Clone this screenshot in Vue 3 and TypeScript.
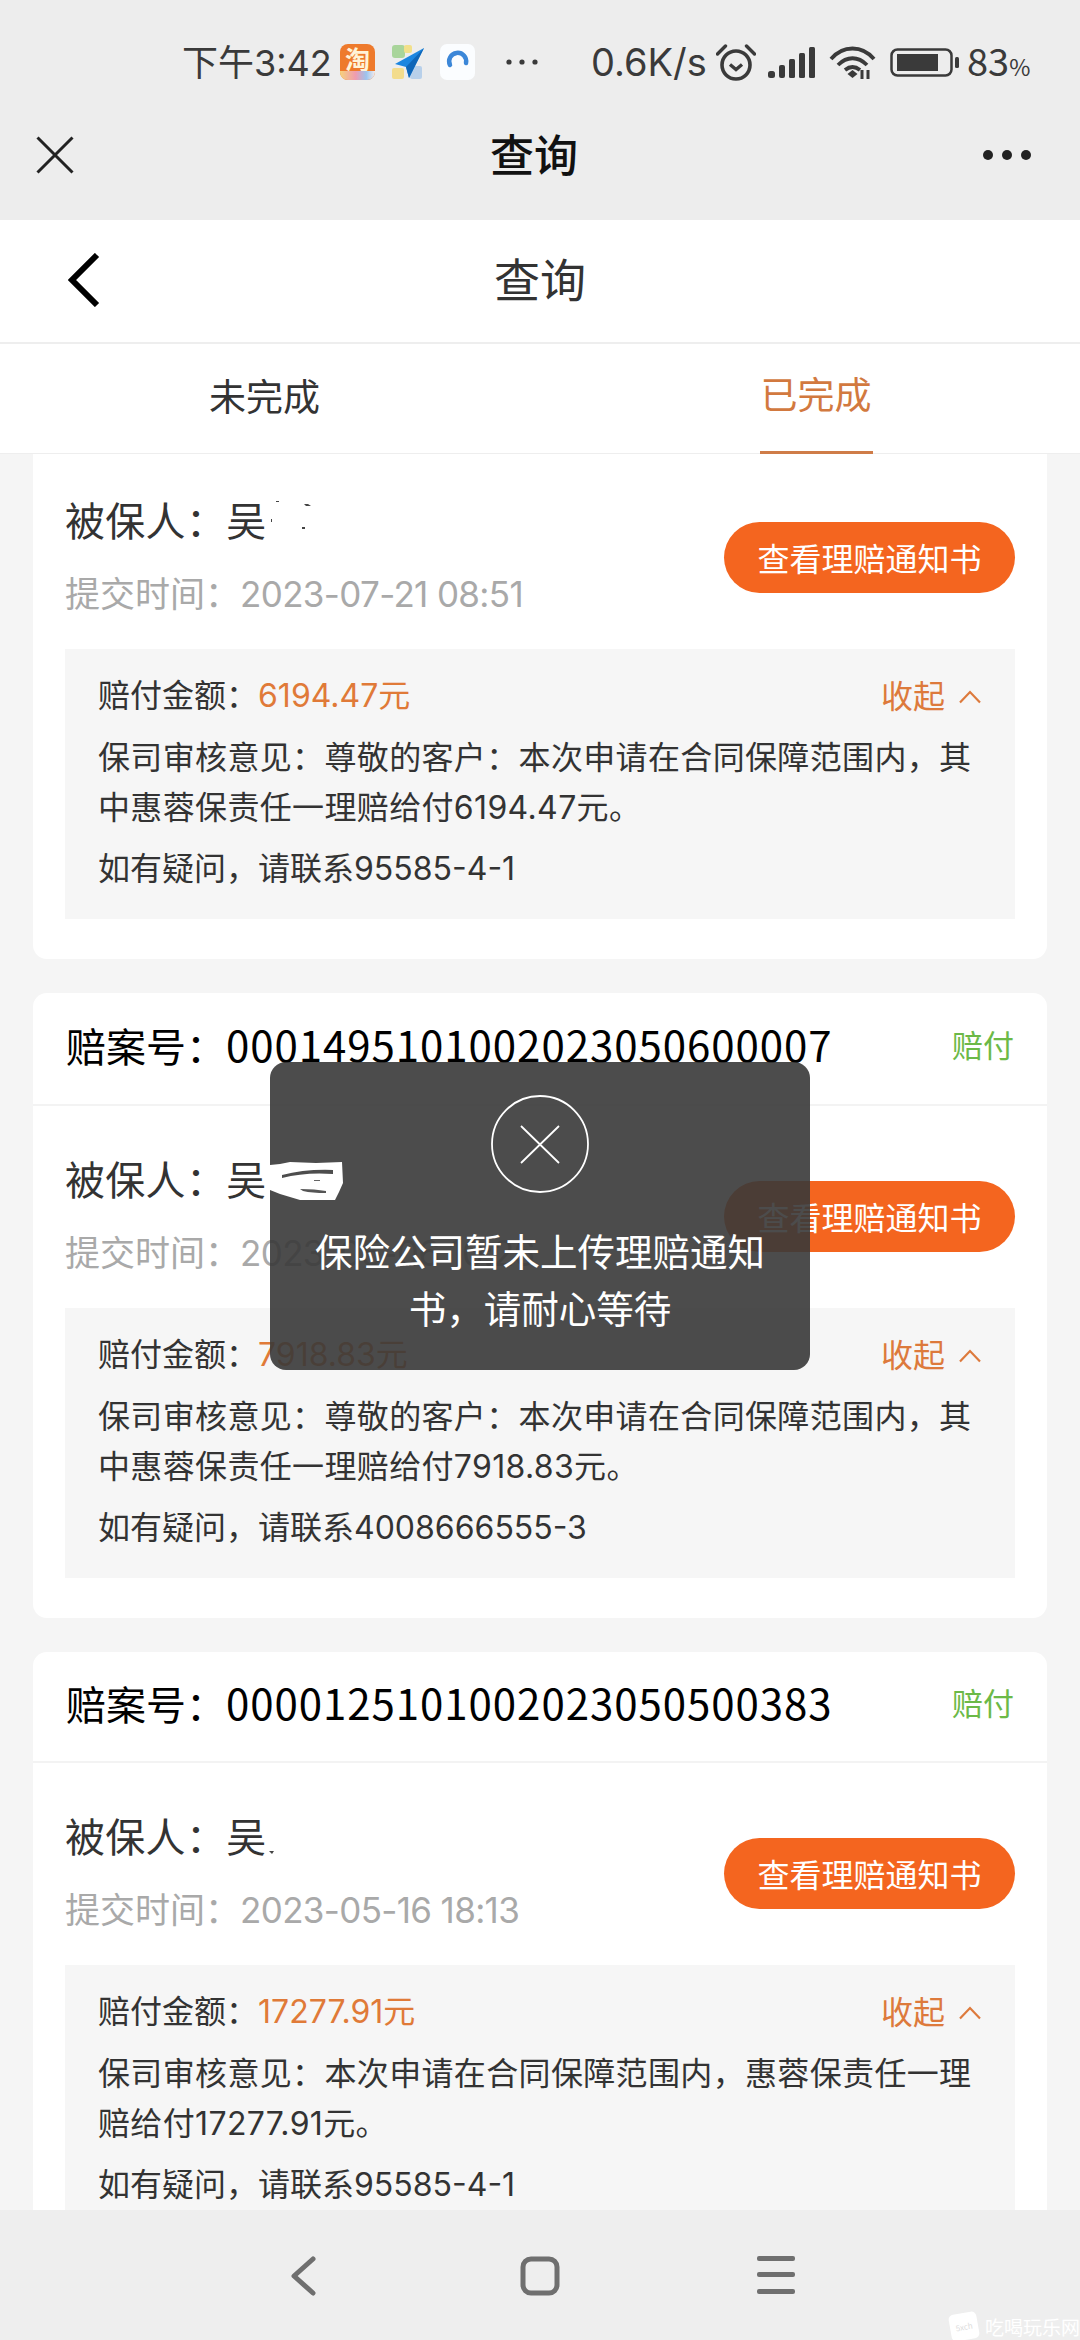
<script setup lang="ts">
interface Claim {
  no?: string
  name: string
  time: string
  amount: string
  opinion: string[]
  phone: string
}
const claims: Claim[] = [
  {
    name: '吴',
    time: '2023-07-21 08:51',
    amount: '6194.47元',
    opinion: ['保司审核意见：尊敬的客户：本次申请在合同保障范围内，其', '中惠蓉保责任一理赔给付6194.47元。'],
    phone: '如有疑问，请联系95585-4-1',
  },
  {
    no: '0001495101002023050600007',
    name: '吴',
    time: '2023-05-06 10:26',
    amount: '7918.83元',
    opinion: ['保司审核意见：尊敬的客户：本次申请在合同保障范围内，其', '中惠蓉保责任一理赔给付7918.83元。'],
    phone: '如有疑问，请联系4008666555-3',
  },
  {
    no: '0000125101002023050500383',
    name: '吴',
    time: '2023-05-16 18:13',
    amount: '17277.91元',
    opinion: ['保司审核意见：本次申请在合同保障范围内，惠蓉保责任一理', '赔给付17277.91元。'],
    phone: '如有疑问，请联系95585-4-1',
  },
]
</script>

<template>
  <div class="page">
    <div class="status">
      <span class="time">下午3:42</span>
      <span class="app taobao"><span class="taobao-char">淘</span><i class="taobao-foot"></i></span>
      <svg class="app plane" viewBox="0 0 35 36">
        <rect x="2" y="1" width="13" height="13" rx="3" fill="#a9d59b" />
        <rect x="14" y="1" width="8" height="8" rx="2" fill="#f2e08a" />
        <rect x="2" y="24" width="12" height="11" rx="2" fill="#f3dc8c" />
        <rect x="20" y="22" width="12" height="13" rx="2" fill="#b8d0ea" />
        <path d="M34 4 5 20l11 3 3 11z" fill="#1c86e0" />
        <path d="M34 4 16 23l3 11z" fill="#0f66b8" />
      </svg>
      <svg class="app ring" viewBox="0 0 35 36">
        <rect x="0" y="0" width="35" height="36" rx="7" fill="#fbfdff" />
        <path d="M10 21a8.500 8.500 0 1 1 16-2" fill="none" stroke="#3c87d8" stroke-width="4.500" stroke-linecap="round" />
      </svg>
      <svg class="more" viewBox="0 0 34 8">
        <circle cx="4" cy="4" r="2.600" fill="#3a3a3a" />
        <circle cx="17" cy="4" r="2.600" fill="#3a3a3a" />
        <circle cx="30" cy="4" r="2.600" fill="#3a3a3a" />
      </svg>
      <span class="speed">0.6K/s</span>
      <svg class="alarm" viewBox="0 0 40 37" fill="none" stroke="#3a3a3a">
        <circle cx="20" cy="21" r="14" stroke-width="3.600" />
        <path d="M14 20.500l6 5 6-5" stroke-width="3.400" />
        <path d="M1.500 10 9.500 2M38.500 10l-8-8" stroke-width="3.400" stroke-linecap="round" />
      </svg>
      <svg class="signal" viewBox="0 0 48 31" fill="#3a3a3a">
        <rect x="0" y="24" width="7" height="7" rx="2.500" />
        <rect x="11" y="18" width="6" height="13" rx="2" />
        <rect x="21" y="12" width="6" height="19" rx="1.500" />
        <rect x="31" y="6" width="6" height="25" rx="1.500" />
        <rect x="41" y="0" width="6" height="31" rx="1.500" />
      </svg>
      <svg class="wifi" viewBox="0 0 47 34" fill="none" stroke="#3a3a3a" stroke-width="3.800">
        <path d="M2 14C14 0 33 0 45 14" />
        <path d="M9 20c9-9 20-9 29 0" />
        <path d="M16 25c5-4 10-4 15 0" />
        <path d="M18.500 29l5-4 5 4-5 4z" fill="#3a3a3a" stroke="none" />
        <path d="M33 25v9M39 25v9" stroke-width="3" />
      </svg>
      <svg class="battery" viewBox="0 0 69 29">
        <rect x="1.500" y="1.500" width="60" height="26" rx="6" fill="none" stroke="#3a3a3a" stroke-width="2.500" />
        <rect x="7" y="6" width="41" height="17" fill="#3a3a3a" />
        <rect x="65" y="9" width="4" height="11" rx="1.500" fill="#3a3a3a" />
      </svg>
      <span class="level">83<small>%</small></span>
    </div>

    <div class="wx-bar">
      <svg class="wx-close" viewBox="0 0 38 38" fill="none" stroke="#222" stroke-width="3">
        <path d="M1.500 1.500 36.500 36.500M36.500 1.500 1.500 36.500" />
      </svg>
      <span class="wx-title">查询</span>
      <svg class="wx-more" viewBox="0 0 50 12" fill="#222">
        <circle cx="6" cy="6" r="5" />
        <circle cx="25" cy="6" r="5" />
        <circle cx="44" cy="6" r="5" />
      </svg>
    </div>

    <div class="head">
      <svg class="back" viewBox="0 0 32 54" fill="none" stroke="#000" stroke-width="6">
        <path d="M29 2 4 27l25 25" />
      </svg>
      <span class="head-title">查询</span>
    </div>

    <div class="tabs">
      <div class="tab">未完成</div>
      <div class="tab active"><span>已完成</span></div>
    </div>

    <div class="list">
      <section v-for="c in claims" :key="c.time" class="card">
        <div v-if="c.no" class="card-head">
          <div class="claim-no">赔案号：<span class="no-digits">{{ c.no }}</span></div>
          <span class="paid">赔付</span>
        </div>
        <div class="body" :class="{ first: !c.no }">
          <div class="summary">
            <div class="who">
              <div class="name">被保人：{{ c.name }}</div>
              <div class="date">提交时间：<span class="stamp">{{ c.time }}</span></div>
            </div>
            <button class="notice">查看理赔通知书</button>
          </div>
          <div class="detail">
            <div class="amount-row">
              <div>赔付金额：<span class="amount">{{ c.amount }}</span></div>
              <div class="fold">
                收起
                <svg viewBox="0 0 24 14" fill="none" stroke="#dd7a3c" stroke-width="2.200">
                  <path d="M2 12.500 12 2l10 10.500" />
                </svg>
              </div>
            </div>
            <p class="opinion">
              <span v-for="l in c.opinion" :key="l" class="line">{{ l }}</span>
            </p>
            <p class="phone">{{ c.phone }}</p>
          </div>
        </div>
      </section>
    </div>

    <nav class="nav">
      <svg class="nav-back" viewBox="0 0 26 40" fill="none" stroke="#6f6f6f" stroke-width="5" stroke-linecap="round" stroke-linejoin="round">
        <path d="M23 3 4 20l19 17" />
      </svg>
      <svg class="nav-home" viewBox="0 0 40 40" fill="none" stroke="#6f6f6f" stroke-width="5">
        <rect x="3" y="3" width="34" height="34" rx="8" />
      </svg>
      <svg class="nav-menu" viewBox="0 0 38 38" fill="#6f6f6f">
        <rect x="0" y="0" width="38" height="5" rx="2" />
        <rect x="0" y="16" width="38" height="5" rx="2" />
        <rect x="0" y="33" width="38" height="5" rx="2" />
      </svg>
    </nav>

    <div class="toast">
      <svg class="toast-icon" viewBox="0 0 98 98" fill="none" stroke="#fff" stroke-width="1.800">
        <circle cx="49" cy="49" r="48" />
        <path d="M30 31l38 37M68 31 30 68" />
      </svg>
      <div class="toast-text">保险公司暂未上传理赔通知<br />书，请耐心等待</div>
    </div>

    <svg class="blot" viewBox="0 0 74 42">
      <path d="M0 4 10 3 20 1 46 2 72 1l1 21-4 9-4 8-35 0-20-6L0 29z" fill="#fff" />
      <path d="M12 14Q35 8 63 9v4Q35 11 12 17z" fill="#4d4d4d" />
      <path d="M44 19h6v1h-6z" fill="#666" />
      <path d="M30 28Q45 28 56 30v2Q42 32 33 30z" fill="#555" />
    </svg>
    <svg class="specks-a" viewBox="0 0 60 36" fill="#444">
      <path d="M5 0h3v1H5zM0 18h1v3H0zM33 3l4 0 3 2h-5zM31 26h3v2h-3z" />
    </svg>
    <svg class="specks-b" viewBox="0 0 12 6" fill="#444">
      <path d="M0 0h5l-2 3z" />
    </svg>

    <div class="mark">
      <span class="mark-bubble">5xch</span>
      <span>吃喝玩乐网</span>
    </div>
  </div>
</template>

<style>
html,
body {
  margin: 0;
  background: #ededed;
}
</style>

<style scoped>
* {
  box-sizing: border-box;
}
.page {
  position: relative;
  width: 1080px;
  height: 2340px;
  display: flex;
  flex-direction: column;
  overflow: hidden;
  background: #f5f5f5;
  color: #333;
  font-family: "Noto Sans CJK SC", "Noto Sans", sans-serif;
}
.status {
  height: 110px;
  flex: none;
  padding: 14px 0 0 182px;
  display: flex;
  align-items: center;
  background: #ededed;
  color: #3a3a3a;
}
.time {
  font-family: Inter, "Noto Sans CJK SC", sans-serif;
  font-size: 36px;
  width: 158px;
  margin-bottom: 4px;
  white-space: nowrap;
}
.app {
  width: 35px;
  height: 36px;
  flex: none;
}
.taobao {
  position: relative;
  border-radius: 8px;
  background: #ee7a2c;
  display: flex;
  justify-content: center;
}
.taobao-char {
  color: #fff3d8;
  font-size: 25px;
  font-weight: 700;
  line-height: 28px;
}
.taobao-foot {
  position: absolute;
  left: 0;
  right: 0;
  bottom: 0;
  height: 9px;
  border-radius: 0 0 8px 8px;
  background: linear-gradient(90deg, #f6d27c, #ef9bb0 45%, #9cc3ee 75%, #f2ecec);
}
.plane {
  margin-left: 15px;
}
.ring {
  margin-left: 15px;
}
.more {
  width: 34px;
  height: 8px;
  margin-left: 30px;
  flex: none;
}
.speed {
  font-family: Inter, "Noto Sans", sans-serif;
  font-size: 38px;
  margin-left: 52px;
  width: 125px;
  white-space: nowrap;
}
.alarm {
  width: 40px;
  height: 37px;
  flex: none;
}
.signal {
  width: 48px;
  height: 31px;
  margin-left: 12px;
  flex: none;
}
.wifi {
  width: 47px;
  height: 34px;
  margin-left: 13px;
  flex: none;
}
.battery {
  width: 69px;
  height: 29px;
  margin-left: 14px;
  flex: none;
}
.level {
  font-size: 38px;
  margin-left: 8px;
  margin-bottom: 5px;
  white-space: nowrap;
}
.level small {
  font-size: 23px;
}
.wx-bar {
  height: 110px;
  flex: none;
  padding: 0 48px 20px 36px;
  display: grid;
  grid-template-columns: 1fr auto 1fr;
  align-items: center;
  background: #ededed;
}
.wx-close {
  width: 38px;
  height: 38px;
}
.wx-title {
  font-size: 44px;
  font-weight: 500;
  color: #111;
  margin-bottom: 4px;
}
.wx-more {
  width: 50px;
  height: 12px;
  justify-self: end;
}
.head {
  height: 124px;
  flex: none;
  position: relative;
  display: flex;
  align-items: center;
  justify-content: center;
  background: #fff;
  border-bottom: 2px solid #eee;
}
.back {
  position: absolute;
  left: 68px;
  top: 33px;
  width: 32px;
  height: 54px;
}
.head-title {
  font-size: 46px;
  color: #333;
  margin-bottom: 8px;
}
.tabs {
  height: 110px;
  flex: none;
  display: grid;
  grid-template-columns: 1fr 1fr;
  background: #fff;
  border-bottom: 1px solid #eee;
}
.tab {
  text-align: center;
  font-size: 37px;
  line-height: 102px;
  color: #333;
  padding-right: 11px;
}
.tab.active {
  color: #d2793f;
  padding: 0 0 0 12px;
  line-height: 98px;
}
.tab.active span {
  display: inline-block;
  height: 110px;
  padding: 0 1px;
  border-bottom: 3px solid #cf7c48;
}
.list {
  flex: 1;
  min-height: 0;
  overflow: hidden;
  padding: 0 33px;
  display: flex;
  flex-direction: column;
  gap: 34px;
}
.card {
  background: #fff;
  border-radius: 0 0 14px 14px;
  flex: none;
}
.card + .card {
  border-radius: 14px;
}
.card-head {
  height: 113px;
  padding: 0 33px 11px 33px;
  display: flex;
  align-items: center;
  justify-content: space-between;
  border-bottom: 2px solid #f3f3f3;
}
.card:last-child .card-head {
  height: 111px;
}
.claim-no {
  font-size: 40px;
  color: #000;
  white-space: nowrap;
}
.no-digits {
  font-size: 42px;
  letter-spacing: 0.95px;
}
.paid {
  font-size: 31px;
  color: #6cb947;
}
.body {
  padding: 38px 32px 40px;
}
.body.first {
  padding-top: 31px;
}
.summary {
  height: 144px;
  display: flex;
  align-items: center;
  justify-content: space-between;
}
.who {
  height: 144px;
  margin-top: -5px;
  line-height: 72px;
  white-space: nowrap;
}
.name {
  font-size: 40px;
  letter-spacing: 0.3px;
  color: #333;
}
.date {
  font-family: Inter, "Noto Sans CJK SC", sans-serif;
  font-size: 35px;
  padding-top: 3px;
  color: #a9a9a9;
}
.stamp {
  letter-spacing: -0.65px;
}
.notice {
  width: 291px;
  height: 71px;
  border: 0;
  border-radius: 36px;
  background: #f4651f;
  color: #fff;
  font-family: inherit;
  font-size: 32px;
  padding: 0;
}
.detail {
  margin-top: 20px;
  background: #f6f6f6;
  padding: 24px 33px 25px 33px;
  font-family: Inter, "Noto Sans CJK SC", sans-serif;
  font-size: 32px;
  color: #333;
  height: 270px;
}
.amount-row {
  height: 48px;
  line-height: 46px;
  display: flex;
  justify-content: space-between;
}
.amount {
  color: #e07a38;
}
.fold {
  color: #dd7a3c;
  display: flex;
  align-items: center;
  gap: 13px;
}
.fold svg {
  width: 24px;
  height: 14px;
}
.opinion {
  margin: 12px 0 0;
  line-height: 50px;
  letter-spacing: 0.35px;
  white-space: nowrap;
}
.line {
  display: block;
}
.phone {
  margin: 11px 0 0;
  line-height: 50px;
}
.nav {
  position: absolute;
  left: 0;
  right: 0;
  bottom: 0;
  height: 130px;
  background: #eeeeee;
  display: flex;
  align-items: flex-start;
  padding: 46px 285px 0 290px;
  justify-content: space-between;
}
.nav-back {
  width: 26px;
  height: 40px;
}
.nav-home {
  width: 40px;
  height: 40px;
  margin-left: 6px;
}
.nav-menu {
  width: 38px;
  height: 38px;
}
.toast {
  position: absolute;
  left: 270px;
  top: 1062px;
  width: 540px;
  height: 308px;
  border-radius: 16px;
  background: rgba(56, 56, 56, 0.9);
  color: #fff;
  display: flex;
  flex-direction: column;
  align-items: center;
  padding-top: 33px;
}
.toast-icon {
  width: 98px;
  height: 98px;
}
.toast-text {
  margin-top: 28px;
  font-size: 37.5px;
  line-height: 57px;
  text-align: center;
  white-space: nowrap;
}
.blot {
  position: absolute;
  left: 270px;
  top: 1161px;
  width: 74px;
  height: 42px;
}
.specks-a {
  position: absolute;
  left: 271px;
  top: 501px;
  width: 60px;
  height: 36px;
}
.specks-b {
  position: absolute;
  left: 269px;
  top: 1851px;
  width: 12px;
  height: 6px;
}
.mark {
  position: absolute;
  right: 0;
  bottom: 0;
  display: flex;
  align-items: center;
  gap: 7px;
  color: #fff;
  font-size: 19px;
  line-height: 27px;
  white-space: nowrap;
}
.mark-bubble {
  width: 28px;
  height: 27px;
  background: #fff;
  border-radius: 5px;
  color: #dcdcdc;
  font-size: 8px;
  text-align: center;
  transform: rotate(-10deg);
}
</style>
